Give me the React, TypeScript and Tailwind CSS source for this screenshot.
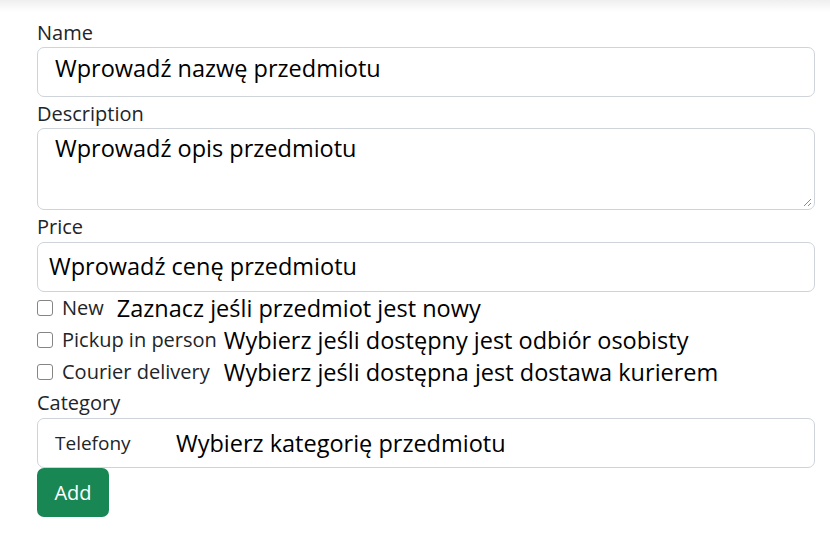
import React from 'react';

const labelCls = "block text-[20px] leading-[26px] text-[#212529]";
const boxCls = "border border-[#ced4da] rounded-[7px] bg-white";
const bigText = "text-[23.5px] text-black leading-[30px]";

const checks = [
  { label: 'New', hint: 'Zaznacz jeśli przedmiot jest nowy', gap: 'ml-[13px]' },
  { label: 'Pickup in person', hint: 'Wybierz jeśli dostępny jest odbiór osobisty', gap: 'ml-[7px]' },
  { label: 'Courier delivery', hint: 'Wybierz jeśli dostępna jest dostawa kurierem', gap: 'ml-[14px]' },
];

export default function App() {
  return (
    <div className="w-[830px] h-[533px] bg-white overflow-hidden" style={{ fontFamily: '"Open Sans", "Noto Sans", sans-serif' }}>
      <div className="h-[12px] bg-gradient-to-b from-[#efefef] to-white" />
      <div className="pl-[37px] pr-[15px] pt-[8px]">
        <label className={labelCls}>Name</label>
        <div className={`${boxCls} mt-[1px] h-[50px] pl-[17px] pt-[5px]`}>
          <span className={bigText}>Wprowadź nazwę przedmiotu</span>
        </div>

        <label className={`${labelCls} mt-[4px]`}>Description</label>
        <div className={`${boxCls} mt-[1px] h-[82px] pl-[17px] pt-[4px] relative`}>
          <span className={bigText}>Wprowadź opis przedmiotu</span>
          <svg className="absolute right-[2px] bottom-[2px]" width="9" height="9" viewBox="0 0 9 9">
            <path d="M8 1L1 8M8 5L5 8" stroke="#8a8a8a" strokeWidth="1" />
          </svg>
        </div>

        <label className={`${labelCls} mt-[4px]`}>Price</label>
        <div className={`${boxCls} mt-[2px] h-[50px] pl-[11px] pb-[2px] flex items-center`}>
          <span className={bigText}>Wprowadź cenę przedmiotu</span>
        </div>

        <div>
          {checks.map((c) => (
            <div key={c.label} className="h-[32px] flex items-center">
              <span className="w-[16px] h-[16px] border border-[#858585] rounded-[3px] bg-white shrink-0" />
              <span className="ml-[9px] text-[20px] text-[#212529] leading-[26px]">{c.label}</span>
              <span className={`${c.gap} ${bigText}`}>{c.hint}</span>
            </div>
          ))}
        </div>

        <label className={`${labelCls} mt-[2px]`}>Category</label>
        <div className={`${boxCls} mt-[2px] h-[50px] pl-[17px] flex items-center`}>
          <span className="text-[19px] text-[#212529] leading-[26px] w-[121px]">Telefony</span>
          <span className={bigText}>Wybierz kategorię przedmiotu</span>
        </div>

        <button className="h-[49px] w-[72px] rounded-[7px] bg-[#198754] text-white text-[20px]">
          Add
        </button>
      </div>
    </div>
  );
}
